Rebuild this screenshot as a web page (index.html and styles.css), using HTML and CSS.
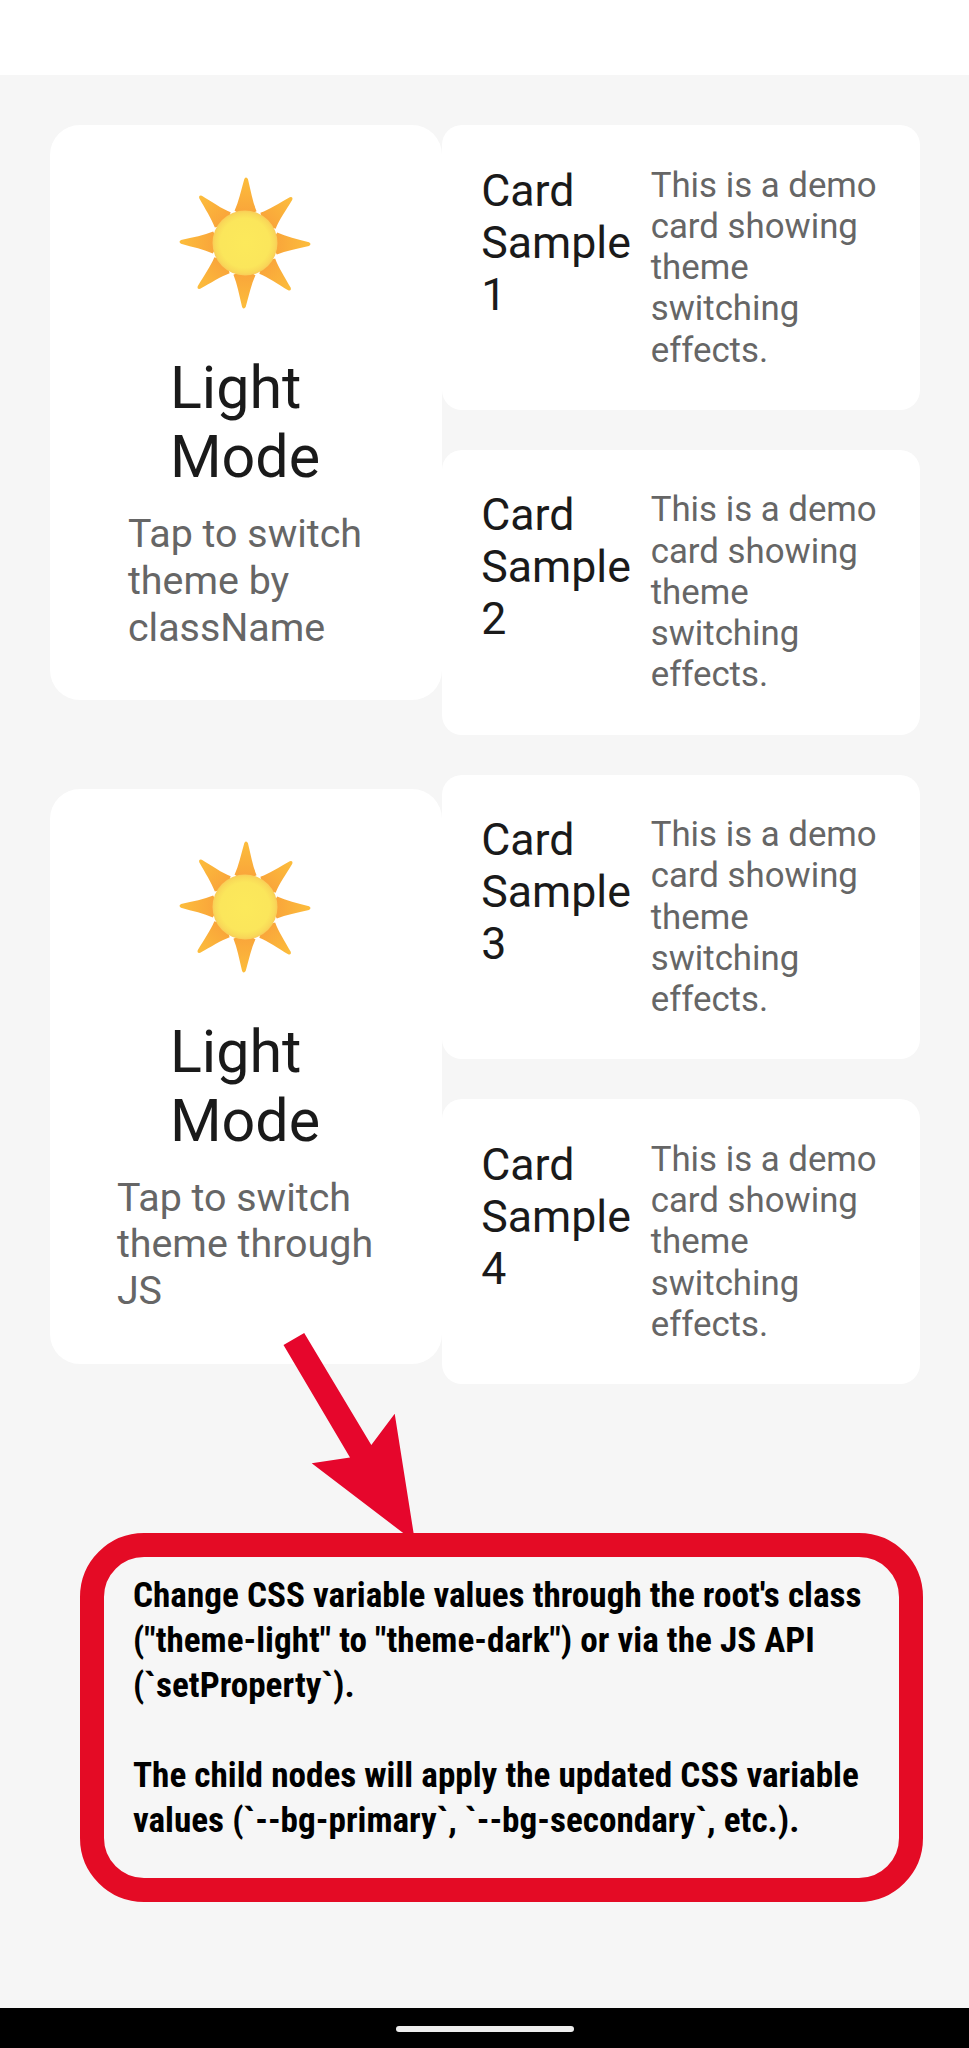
FILE: index.html
```html
<!DOCTYPE html>
<html lang="en">
<head>
<meta charset="utf-8">
<title>Theme switching</title>
<link rel="stylesheet" href="styles.css">
</head>
<body>
<svg class="defs" width="0" height="0" aria-hidden="true">
  <defs>
    <radialGradient id="disc"><stop offset="0" stop-color="#fce95b"/><stop offset=".76" stop-color="#fbe65b"/><stop offset=".92" stop-color="#f9d958"/><stop offset="1" stop-color="#f9cc57"/></radialGradient>
    <linearGradient id="ray" x1="0" y1="0" x2="0" y2="1"><stop offset="0" stop-color="#fcbd3c"/><stop offset="1" stop-color="#f9a23a"/></linearGradient>
    <path id="spike" d="M-1.8-64Q0-67 1.8-64C5-52 7-41 11-32L0-26L-11-32C-7-41-5-52-1.8-64Z" fill="url(#ray)"/>
    <symbol id="sun" viewBox="-68 -68 136 136">
      <g transform="rotate(1)">
        <use href="#spike"/><use href="#spike" transform="rotate(45)"/><use href="#spike" transform="rotate(90)"/><use href="#spike" transform="rotate(135)"/>
        <use href="#spike" transform="rotate(180)"/><use href="#spike" transform="rotate(225)"/><use href="#spike" transform="rotate(270)"/><use href="#spike" transform="rotate(315)"/>
      </g>
      <circle r="32.5" fill="url(#disc)"/>
    </symbol>
  </defs>
</svg>
<div class="screen">
  <header class="status-bar"></header>
  <main class="content">
    <section class="toggles">
      <div class="toggle">
        <svg class="sun"><use href="#sun"/></svg>
        <div class="toggle-title">Light<br>Mode</div>
        <div class="toggle-hint">Tap to switch<br>theme by<br>className</div>
      </div>
      <div class="toggle">
        <svg class="sun"><use href="#sun"/></svg>
        <div class="toggle-title">Light<br>Mode</div>
        <div class="toggle-hint">Tap to switch<br>theme through<br>JS</div>
      </div>
      <svg class="arrow" viewBox="0 0 134 210"><path d="M1.5 13L22.2 1L89.3 113L112.7 81.7L133 210L29.7 131.3L68 125.5Z"/></svg>
    </section>
    <section class="cards">
      <article class="card"><div class="card-title">Card<br>Sample<br>1</div><p class="card-text">This is a demo<br>card showing<br>theme<br>switching<br>effects.</p></article>
      <article class="card"><div class="card-title">Card<br>Sample<br>2</div><p class="card-text">This is a demo<br>card showing<br>theme<br>switching<br>effects.</p></article>
      <article class="card"><div class="card-title">Card<br>Sample<br>3</div><p class="card-text">This is a demo<br>card showing<br>theme<br>switching<br>effects.</p></article>
      <article class="card"><div class="card-title">Card<br>Sample<br>4</div><p class="card-text">This is a demo<br>card showing<br>theme<br>switching<br>effects.</p></article>
    </section>
  </main>
  <aside class="callout">
    <p>Change CSS variable values through the root's class<br>("theme-light" to "theme-dark") or via the JS API<br>(`setProperty`).</p>
    <p>The child nodes will apply the updated CSS variable<br>values (`--bg-primary`, `--bg-secondary`, etc.).</p>
  </aside>
  <footer class="nav-bar"><div class="nav-pill"></div></footer>
</div>
</body>
</html>
```

FILE: styles.css
```css
* { box-sizing: border-box; }
body { margin: 0; background: #f6f6f6; font-family: Roboto, sans-serif; font-variant-ligatures: none; }
p { margin: 0; }
.defs { display: block; position: absolute; }
.screen { display: flex; flex-direction: column; height: 2048px; overflow: hidden; }
.status-bar { height: 75px; background: #fff; flex: none; }
.content { display: flex; align-items: flex-start; padding: 50px 49px 0 50px; height: 1458px; flex: none; }
.toggles { position: relative; width: 391.7px; flex: none; display: flex; flex-direction: column; gap: 88.5px; }
.toggle { height: 575px; background: #fff; border-radius: 30px; padding: 50px 1.7px 0 0; display: flex; flex-direction: column; align-items: center; }
.sun { width: 136px; height: 136px; flex: none; }
.toggle-title { margin-top: 42px; font-size: 59.2px; line-height: 69px; color: #1a1a1a; white-space: nowrap; }
.toggle-hint { margin-top: 20px; font-size: 39.4px; line-height: 46.8px; color: #666; white-space: nowrap; }
.arrow { position: absolute; left: 232px; top: 1207px; width: 134px; height: 210px; fill: #e6062c; }
.cards { flex: 1; display: flex; flex-direction: column; gap: 40px; }
.card { height: 284.8px; background: #fff; border-radius: 20px; padding: 39.5px; display: flex; }
.card-title { width: 169.5px; flex: none; font-size: 44.7px; line-height: 52px; color: #1a1a1a; }
.card-text { font-size: 34.8px; line-height: 41.3px; color: #666; white-space: nowrap; }
.callout { position: relative; flex: none; width: 843px; height: 368.5px; margin-left: 80px; border: 24px solid #e40b25; border-radius: 64px; padding: 16px 29px; font-family: "Roboto Condensed", Roboto, sans-serif; font-stretch: 75%; font-weight: 700; font-size: 35.2px; line-height: 45px; color: #000; white-space: nowrap; }
.callout p + p { margin-top: 45px; }
.nav-bar { margin-top: auto; height: 40.5px; flex: none; background: #000; display: flex; justify-content: center; padding-top: 18.5px; }
.nav-pill { width: 178px; height: 6px; border-radius: 3px; background: #eee; }
```
